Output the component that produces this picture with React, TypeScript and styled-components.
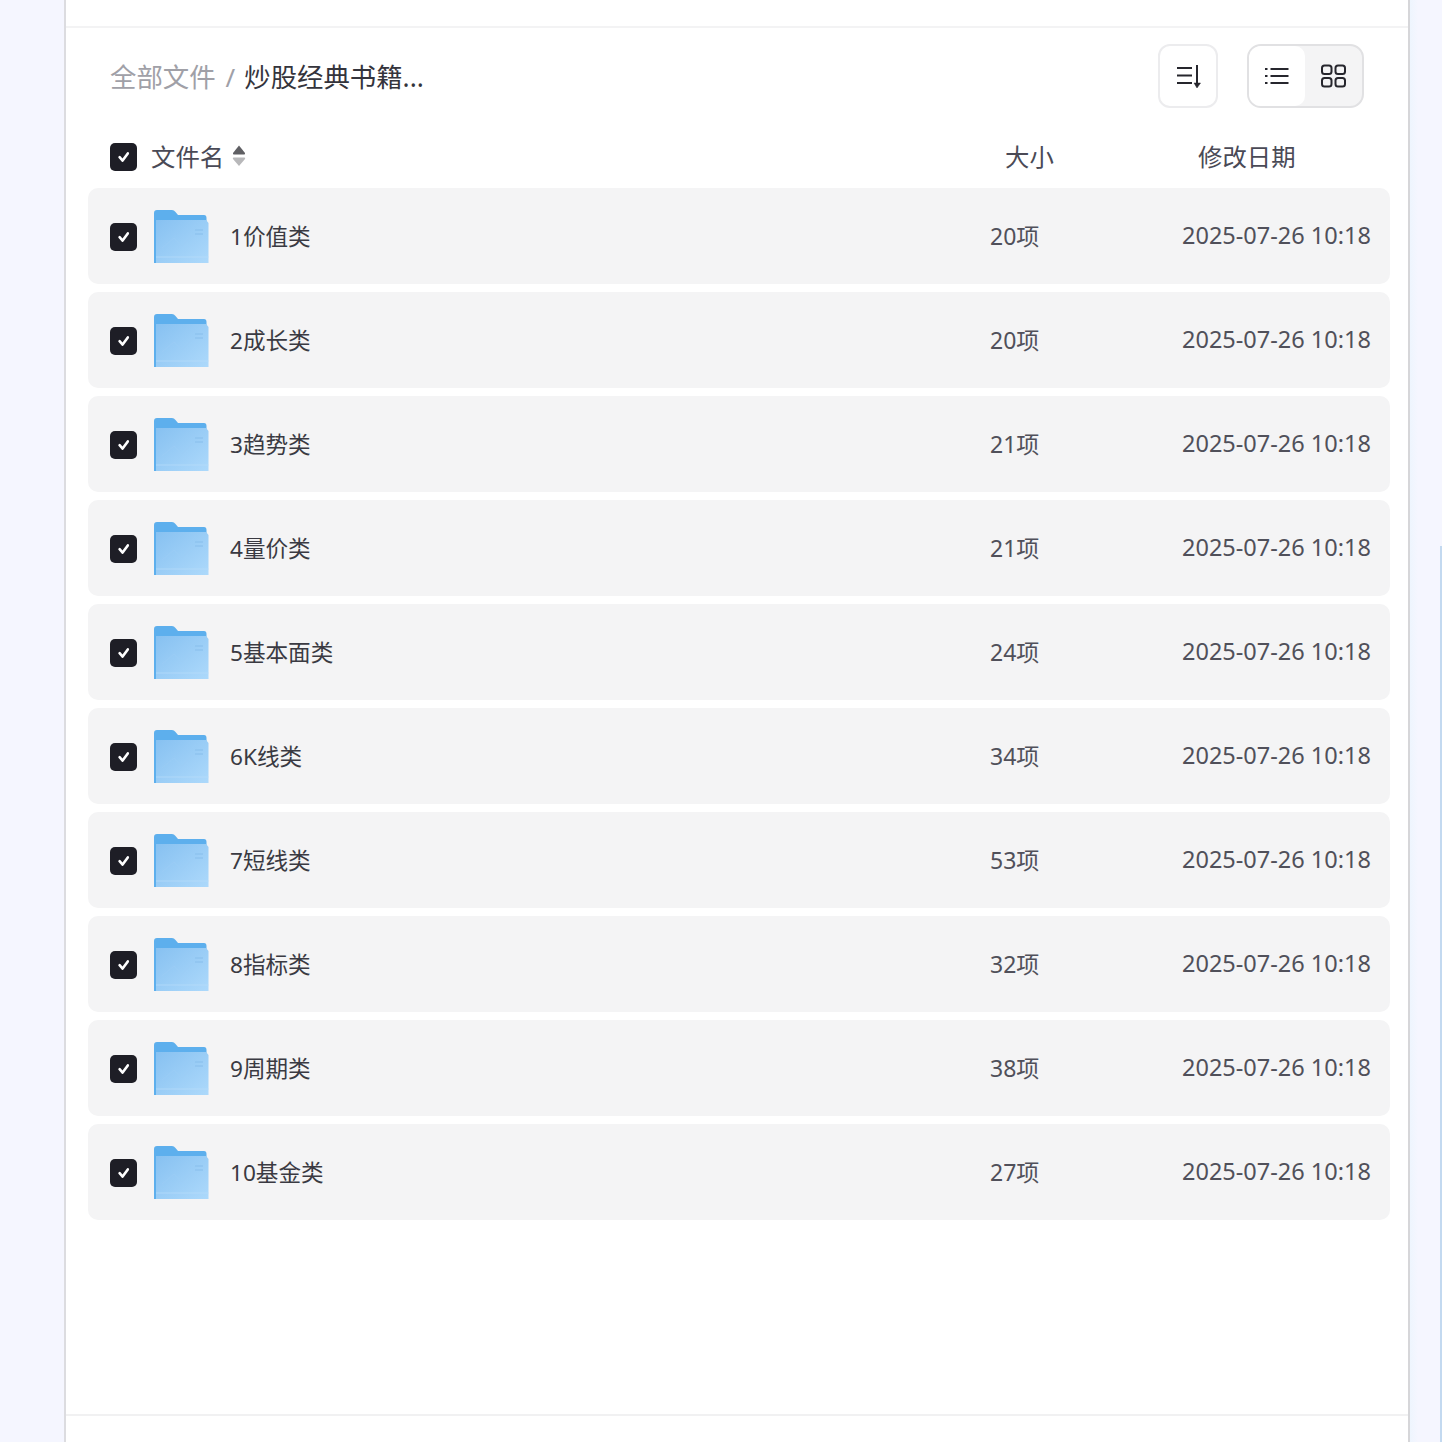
import React from "react";
import styled, { createGlobalStyle } from "styled-components";

const Global = createGlobalStyle`
  html, body { margin: 0; padding: 0; background: #f5f6ff; }
  body { font-family: "Noto Sans", "Noto Sans CJK SC", sans-serif; }
  * { box-sizing: border-box; }
`;

const Page = styled.div`
  display: flex;
  width: 1442px;
  height: 1442px;
  overflow: hidden;
  background: #f5f6ff;
`;
const LeftGutter = styled.div`
  width: 64px;
  flex: none;
`;
const RightGutter = styled.div`
  flex: 1;
  display: flex;
  justify-content: flex-end;
  padding-top: 546px;
  background: linear-gradient(90deg, #eef5fe 0, #f5f6ff 8px);
`;
const Thumb = styled.div`
  width: 2px;
  height: 896px;
  background: #c3d9f0;
`;
const Panel = styled.main`
  width: 1346px;
  flex: none;
  display: flex;
  flex-direction: column;
  background: #fff;
  border-left: 2px solid #dcdce0;
  border-right: 2px solid #d6d6d9;
`;
const TopStrip = styled.div`
  height: 28px;
  flex: none;
  border-bottom: 2px solid #f3f3f4;
`;
const Content = styled.div`
  flex: 1;
  display: flex;
  flex-direction: column;
  padding: 16px 18px 0 22px;
  border-bottom: 2px solid #f1f1f2;
  height: 0;
`;
const Bottom = styled.div`
  height: 26px;
  flex: none;
`;
const Toolbar = styled.div`
  display: flex;
  align-items: center;
  height: 64px;
  padding: 0 26px 0 22px;
`;
const Crumbs = styled.div`
  flex: 1;
  display: flex;
  align-items: center;
  padding-top: 2px;
  font-size: 26.4px;
  line-height: 36px;
  color: #34343c;
`;
const CrumbRoot = styled.span`
  color: #a0a0a7;
`;
const CrumbSep = styled.span`
  color: #a0a0a7;
  margin: 0 9px 0 10px;
  font-size: 26px;
`;
const IconButton = styled.div`
  width: 60px;
  height: 64px;
  display: flex;
  align-items: center;
  justify-content: center;
  padding-left: 3px;
  border: 2px solid #ececee;
  border-radius: 12px;
  background: #fff;
  margin-right: 29px;
`;
const Toggle = styled.div`
  width: 117px;
  height: 64px;
  display: flex;
  border: 2px solid #e1e1e3;
  border-radius: 14px;
  background: #f4f4f5;
  overflow: hidden;
`;
const ToggleItem = styled.div<{ $active?: boolean }>`
  width: ${(p) => (p.$active ? "56px" : "57px")};
  display: flex;
  align-items: center;
  justify-content: center;
  background: ${(p) => (p.$active ? "#fff" : "transparent")};
  border-radius: ${(p) => (p.$active ? "0 10px 10px 0" : "0")};
`;
const HeaderRow = styled.div`
  display: grid;
  grid-template-columns: 895px 193px 1fr;
  align-items: center;
  height: 62px;
  margin-top: 18px;
  padding-left: 22px;
  font-size: 26px;
  color: #4a4a56;
`;
const HeaderName = styled.div`
  display: flex;
  align-items: center;
`;
const HeaderLabel = styled.span`
  margin: 0 8px 0 14px;
  padding-bottom: 4px;
  font-size: 24.4px;
`;
const HeaderCell = styled.div`
  padding-bottom: 4px;
  font-size: 24.4px;
`;
const CaretWrap = styled.span`
  display: flex;
  margin-bottom: 2px;
`;
const List = styled.div`
  display: flex;
  flex-direction: column;
  gap: 8px;
`;
const Row = styled.div`
  display: grid;
  grid-template-columns: 880px 192px 1fr;
  align-items: center;
  height: 96px;
  padding-left: 22px;
  background: #f4f4f5;
  border-radius: 10px;
`;
const NameCell = styled.div`
  display: flex;
  align-items: center;
  padding-top: 2px;
`;
const FolderWrap = styled.div`
  margin-left: 17px;
  margin-right: 21px;
  width: 55px;
  height: 54px;
  display: flex;
`;
const Name = styled.span`
  font-size: 22.6px;
  line-height: 32px;
  color: #3a3a42;
`;
const Meta = styled.span<{ $size: number }>`
  padding-bottom: 2px;
  font-size: ${(p) => p.$size}px;
  color: #50505a;
  white-space: nowrap;
`;
const Box = styled.div`
  width: 27px;
  height: 28px;
  flex: none;
  display: flex;
  align-items: center;
  justify-content: center;
  background: #1e1e26;
  border-radius: 5px;
`;

const Check = () => (
  <Box>
    <svg width="14" height="14" viewBox="0 0 14 14" fill="none">
      <path d="M2.6 7.2 L5.6 10.6 L10.8 3.4" stroke="#fff" strokeWidth="2.6" strokeLinecap="round" strokeLinejoin="round" />
    </svg>
  </Box>
);

const SortCaret = () => (
  <svg width="14" height="22" viewBox="0 0 14 22">
    <path d="M7 0.5 L13 8 Q13.4 9.5 12 9.5 L2 9.5 Q0.6 9.5 1 8 Z" fill="#5f5f63" />
    <path d="M1.5 12.5 L12.5 12.5 Q13.6 12.5 13 14 L7 21 L1 14 Q0.4 12.5 1.5 12.5 Z" fill="#b8b8ba" />
  </svg>
);

const Folder = ({ id }: { id: number }) => (
  <svg width="55" height="54" viewBox="0 0 55 54">
    <defs>
      <linearGradient id={`fb${id}`} x1="0" y1="0" x2="1" y2="1">
        <stop offset="0" stopColor="#87c1f1" />
        <stop offset="1" stopColor="#add9fb" />
      </linearGradient>
    </defs>
    <path d="M0 3 Q0 0 3 0 L18 0 Q20 0 21.5 2 L24 5 L50 5 Q52.5 5 52.5 8 L52.5 12 L0 12 Z" fill="#5dafed" />
    <path d="M0 8 L2 8 L2 53 L0 53 Z" fill="#5dafed" />
    <path d="M2 10 L52 10 L54.5 13 L54.5 53 L2 53 Z" fill={`url(#fb${id})`} />
    <path d="M8 38 L20 28 L28 36 L40 24" stroke="#9ccdf5" strokeWidth="1" fill="none" opacity="0.6" />
    <path d="M41 20 H49 M41 24 H49" stroke="#8ec3ef" strokeWidth="1.5" />
    <path d="M2 47 H54.5" stroke="#b9defb" strokeWidth="1" opacity="0.7" />
  </svg>
);

const SortIcon = () => (
  <svg width="28" height="26" viewBox="0 0 28 26" fill="none" stroke="#26262d" strokeWidth="2">
    <path d="M1 5 H16 M1 12.5 H16 M1 20 H16" />
    <path d="M21 2 V20" />
    <path d="M18 20 H24.5 L21 25 Z" fill="#26262d" strokeWidth="0.5" />
  </svg>
);
const ListIcon = () => (
  <svg width="26" height="20" viewBox="0 0 26 20" fill="none" stroke="#26262d" strokeWidth="2">
    <path d="M6.5 3 H24.5 M6.5 10 H24.5 M6.5 17 H24.5" />
    <path d="M1 3 H3.5 M1 10 H3.5 M1 17 H3.5" />
  </svg>
);
const GridIcon = () => (
  <svg width="26" height="24" viewBox="0 0 26 24" fill="none" stroke="#26262d" strokeWidth="2">
    <rect x="1" y="1.5" width="9.5" height="8.5" rx="2.5" />
    <rect x="14.5" y="1.5" width="9.5" height="8.5" rx="2.5" />
    <rect x="1" y="14" width="9.5" height="8.5" rx="2.5" />
    <rect x="14.5" y="14" width="9.5" height="8.5" rx="2.5" />
  </svg>
);

const rows = [
  ["1价值类", "20项"],
  ["2成长类", "20项"],
  ["3趋势类", "21项"],
  ["4量价类", "21项"],
  ["5基本面类", "24项"],
  ["6K线类", "34项"],
  ["7短线类", "53项"],
  ["8指标类", "32项"],
  ["9周期类", "38项"],
  ["10基金类", "27项"],
];

export default function App() {
  return (
    <Page>
      <Global />
      <LeftGutter />
      <Panel>
        <TopStrip />
        <Content>
          <Toolbar>
            <Crumbs>
              <CrumbRoot>全部文件</CrumbRoot>
              <CrumbSep>/</CrumbSep>
              <span>炒股经典书籍...</span>
            </Crumbs>
            <IconButton>
              <SortIcon />
            </IconButton>
            <Toggle>
              <ToggleItem $active>
                <ListIcon />
              </ToggleItem>
              <ToggleItem>
                <GridIcon />
              </ToggleItem>
            </Toggle>
          </Toolbar>
          <HeaderRow>
            <HeaderName>
              <Check />
              <HeaderLabel>文件名</HeaderLabel>
              <CaretWrap>
                <SortCaret />
              </CaretWrap>
            </HeaderName>
            <HeaderCell>大小</HeaderCell>
            <HeaderCell>修改日期</HeaderCell>
          </HeaderRow>
          <List>
            {rows.map(([name, size], i) => (
              <Row key={name}>
                <NameCell>
                  <Check />
                  <FolderWrap>
                    <Folder id={i} />
                  </FolderWrap>
                  <Name>{name}</Name>
                </NameCell>
                <Meta $size={23}>{size}</Meta>
                <Meta $size={23.5}>2025-07-26 10:18</Meta>
              </Row>
            ))}
          </List>
        </Content>
        <Bottom />
      </Panel>
      <RightGutter>
        <Thumb />
      </RightGutter>
    </Page>
  );
}
